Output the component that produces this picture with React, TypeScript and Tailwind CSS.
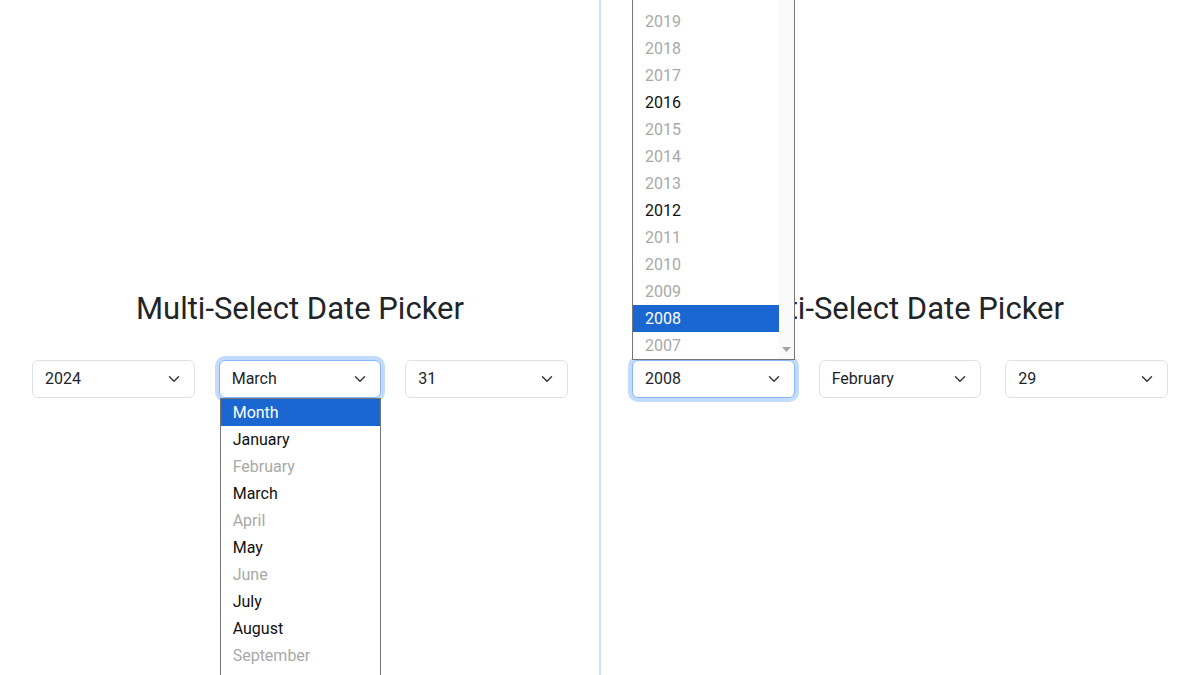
import React from "react";

const Chevron = () => (
  <svg width="16" height="12" viewBox="0 0 16 16" className="shrink-0" fill="none">
    <path d="m2 5 6 6 6-6" stroke="#343a40" strokeWidth="2" strokeLinecap="round" strokeLinejoin="round" />
  </svg>
);

function SelectBox({ value, focused }: { value: string; focused?: boolean }) {
  return (
    <div
      className={
        focused
          ? "h-[38px] w-full rounded-[6px] border border-[#86b7fe] bg-white pl-3 pr-3 flex items-center justify-between shadow-[0_0_0_4px_rgba(13,110,253,0.25)]"
          : "h-[38px] w-full rounded-[6px] border border-[#dee2e6] bg-white pl-3 pr-3 flex items-center justify-between"
      }
    >
      <span className="text-[16px] text-[#212529]">{value}</span>
      <Chevron />
    </div>
  );
}

type Opt = { label: string; disabled?: boolean; selected?: boolean };

function OptionRow({ o }: { o: Opt }) {
  const cls = o.selected
    ? "h-[27px] flex items-center pl-3 bg-[#1a67d2] text-white"
    : o.disabled
    ? "h-[27px] flex items-center pl-3 text-[#a9a9a9]"
    : "h-[27px] flex items-center pl-3 text-[#101010]";
  return <div className={cls}>{o.label}</div>;
}

const months: Opt[] = [
  { label: "Month", selected: true },
  { label: "January" },
  { label: "February", disabled: true },
  { label: "March" },
  { label: "April", disabled: true },
  { label: "May" },
  { label: "June", disabled: true },
  { label: "July" },
  { label: "August" },
  { label: "September", disabled: true },
];

const years: Opt[] = [2019, 2018, 2017, 2016, 2015, 2014, 2013, 2012, 2011, 2010, 2009, 2008, 2007].map((y) => ({
  label: String(y),
  disabled: y % 4 !== 0,
  selected: y === 2008,
}));

function Title() {
  return (
    <h2 className="text-center text-[31px] leading-[38px] font-normal text-[#212529] mb-8">Multi-Select Date Picker</h2>
  );
}

export default function App() {
  return (
    <div
      className="w-[1200px] h-[675px] overflow-hidden bg-white flex"
      style={{ fontFamily: "Roboto, 'Noto Sans', sans-serif" }}
    >
      {/* Left half */}
      <div className="w-[599px] pl-[32px] pr-[31px] pt-[290px] flex flex-col">
        <Title />
        <div className="grid grid-cols-3 gap-6">
          <SelectBox value="2024" />
          <div className="relative">
            <SelectBox value="March" focused />
            <div className="absolute top-full left-[1px] right-0 z-20 border border-[#767676] bg-white text-[16px] h-[300px] overflow-hidden">
              {months.map((o) => (
                <OptionRow key={o.label} o={o} />
              ))}
            </div>
          </div>
          <SelectBox value="31" />
        </div>
      </div>

      {/* Divider */}
      <div className="w-[2px] h-full bg-[#d3e2fc]" />

      {/* Right half */}
      <div className="w-[599px] pl-[31px] pr-[32px] pt-[290px] flex flex-col">
        <Title />
        <div className="grid grid-cols-3 gap-6">
          <div className="relative">
            <SelectBox value="2008" focused />
            <div className="absolute bottom-full left-0 right-0 z-20 h-[360px] border-x border-b border-[#767676] bg-white text-[16px] flex">
              <div className="flex-1 flex flex-col justify-end">
                {years.map((o) => (
                  <OptionRow key={o.label} o={o} />
                ))}
              </div>
              <div className="w-[15px] bg-[#fafafa] flex flex-col justify-end items-center pb-[7px]">
                <svg width="9" height="5" viewBox="0 0 9 5">
                  <path d="M0 0 H9 L4.5 5 Z" fill="#a3a3a3" />
                </svg>
              </div>
            </div>
          </div>
          <SelectBox value="February" />
          <SelectBox value="29" />
        </div>
      </div>
    </div>
  );
}
